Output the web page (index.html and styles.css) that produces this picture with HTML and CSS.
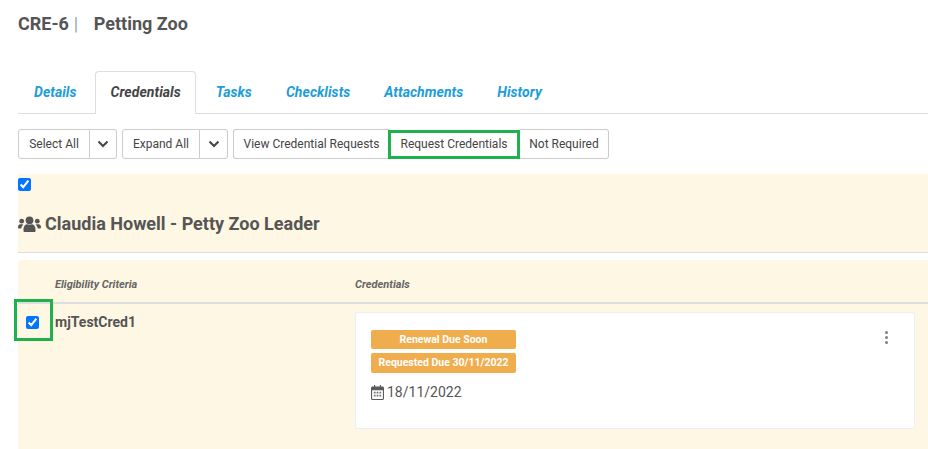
FILE: index.html
```html
<!DOCTYPE html>
<html lang="en">
<head>
<meta charset="utf-8">
<title>Petting Zoo</title>
<link rel="stylesheet" href="styles.css">
</head>
<body>
<main class="page">
  <h1 class="title"><span>CRE-6</span><span class="sep">|</span><span class="name">Petting Zoo</span></h1>
  <nav class="tabs">
    <a class="tab">Details</a>
    <a class="tab active">Credentials</a>
    <a class="tab">Tasks</a>
    <a class="tab">Checklists</a>
    <a class="tab">Attachments</a>
    <a class="tab">History</a>
  </nav>
  <div class="toolbar">
    <div class="split">
      <button class="btn">Select All</button>
      <button class="btn caret"><svg width="12" height="8" viewBox="0 0 12 8"><path d="M1.5 1.5 6 6l4.5-4.5" fill="none" stroke="#444" stroke-width="2"/></svg></button>
    </div>
    <div class="split">
      <button class="btn expand">Expand All</button>
      <button class="btn caret wide"><svg width="12" height="8" viewBox="0 0 12 8"><path d="M1.5 1.5 6 6l4.5-4.5" fill="none" stroke="#444" stroke-width="2"/></svg></button>
    </div>
    <div class="group">
      <button class="btn view">View Credential Requests</button>
      <button class="btn request">Request Credentials</button>
      <button class="btn notreq">Not Required</button>
    </div>
  </div>
  <section class="person">
    <label class="check top"><input type="checkbox" checked></label>
    <h2 class="person-name">
      <svg class="users" width="23" height="16" viewBox="0 0 23 16"><g fill="#555"><circle cx="11.5" cy="4.3" r="3.9"/><path d="M5.5 15.2v-2.4c0-2.8 2-4.6 3.7-4.6 1.4.6 3.2.6 4.6 0 1.7 0 3.7 1.8 3.7 4.6v2.4c0 .5-.4.8-.8.8H6.3c-.4 0-.8-.3-.8-.8z"/><circle cx="3.7" cy="5.2" r="2.4"/><circle cx="19.3" cy="5.2" r="2.4"/><path d="M0 11.2c0-1.7 1-3 2.3-3h1.8c.5 0 1 .2 1.3.5-1.2.9-2 2.4-2.2 3.9H1.1c-.6 0-1.1-.5-1.1-1.4z"/><path d="M23 11.2c0-1.7-1-3-2.3-3h-1.800c-.5 0-1 .2-1.300.5 1.200.9 2 2.400 2.200 3.900h2.100c.6 0 1.100-.5 1.100-1.400z"/></g></svg>
      Claudia Howell - Petty Zoo Leader
    </h2>
  </section>
  <section class="table">
    <div class="thead">
      <div class="col-a">Eligibility Criteria</div>
      <div class="col-b">Credentials</div>
    </div>
    <div class="row">
      <div class="cell-check">
        <label class="check"><input type="checkbox" checked></label>
        <span class="highlight"></span>
      </div>
      <div class="col-a cred-name">mjTestCred1</div>
      <div class="col-b">
        <article class="card">
          <div class="card-main">
            <span class="badge">Renewal Due Soon</span>
            <span class="badge">Requested Due 30/11/2022</span>
            <div class="date">
              <svg width="13" height="15" viewBox="0 0 13 15"><path fill="#5a5a5a" fill-rule="evenodd" d="M3 0h1.200v1.500h4.600V0H10v1.500h1.500c.8 0 1.500.7 1.500 1.500v10.500c0 .8-.7 1.500-1.500 1.500h-10C.7 15 0 14.300 0 13.500V3c0-.8.7-1.500 1.500-1.500H3zM1.100 5.200v8.300c0 .2.200.4.400.4h10c.2 0 .4-.2.400-.4V5.200z"/><path fill="#777" d="M2.800 6.800h1.800v1.600H2.800zM5.600 6.800h1.800v1.600H5.600zM8.400 6.800h1.800v1.600H8.400zM2.800 9.800h1.800v1.600H2.800zM5.600 9.800h1.800v1.600H5.600zM8.400 9.800h1.800v1.600H8.400z"/></svg>
              <span>18/11/2022</span>
            </div>
          </div>
          <div class="dots"><i></i><i></i><i></i></div>
        </article>
      </div>
    </div>
  </section>
</main>
</body>
</html>
```
FILE: styles.css
```css
* { box-sizing: border-box; }
html, body { margin: 0; padding: 0; height: 449px; overflow: hidden; background: #fff; }
body { font-family: Roboto, "Liberation Sans", sans-serif; color: #555; }
.page { padding: 13px 0 0 18px; }

.title { margin: 0; font-size: 18px; line-height: 21px; font-weight: 700; color: #555; display: flex; }
.title .sep { font-weight: 400; color: #9aa5ad; margin-left: 5px; }
.title .name { margin-left: 15.5px; }

.tabs { margin-top: 37px; height: 43px; display: flex; border-bottom: 1px solid #dedede; }
.tab { padding: 13px 16px 0; font-size: 14px; line-height: 16px; font-weight: 700; font-style: italic; letter-spacing: 0.05px; color: #1b9dd9; height: 42px; margin-right: 2px; }
.tab.active { color: #444; background: #fff; border: 1px solid #dedede; border-bottom: 0; border-radius: 4px 4px 0 0; height: 43px; padding: 12px 14px 0 15px; margin-left: 0; margin-right: 4px; }

.toolbar { margin-top: 15px; display: flex; gap: 5px; height: 30px; }
.split, .group { display: flex; height: 30px; }
.btn { font: 400 12px/16px Roboto, "Liberation Sans", sans-serif; color: #444; background: #fff; border: 1px solid #ccc; padding: 0; height: 30px; }
.split .btn:first-child { width: 72px; border-radius: 3px 0 0 3px; }
.split .btn.expand { width: 78px; }
.split .caret { width: 27px; border-left: 0; border-radius: 0 3px 3px 0; display: flex; align-items: center; justify-content: center; }
.split .caret.wide { width: 28px; }
.group .view { width: 156px; border-radius: 3px 0 0 3px; border-right: 0; }
.group .request { width: 132px; margin-left: -1px; border: 3px solid #1fb14e; height: 29px; margin-top: 1px; padding-bottom: 2px; }
.group .notreq { width: 89px; border-left: 0; border-radius: 0 3px 3px 0; }

.person { margin-top: 15px; height: 79px; background: #fef7e3; border-bottom: 1px solid #dcdcdc; padding-top: 4px; }
.check { display: block; width: 13px; height: 13px; }
.check input { display: block; margin: 0; width: 13px; height: 13px; accent-color: #0075ff; }
.person-name { margin: 22px 0 0; font-size: 18px; line-height: 21px; font-weight: 700; color: #555; display: flex; align-items: center; gap: 4px; }

.table { margin-top: 7px; background: #fef7e3; height: 189px; border-radius: 4px 0 0 0; }
.thead { display: flex; height: 44px; border-bottom: 2px solid #dedede; font-size: 11px; line-height: 13px; font-weight: 700; font-style: italic; color: #666; padding-top: 18px; }
.thead .col-a { margin-left: 37px; width: 300px; }
.row { display: flex; padding-top: 8px; }
.cell-check { width: 37px; flex: none; padding: 4px 0 0 8px; position: relative; }
.highlight { position: absolute; left: -4px; top: -13px; width: 39px; height: 42px; border: 3px solid #1fb14e; }
.cred-name { width: 300px; flex: none; font-size: 14px; line-height: 16px; font-weight: 700; color: #555; padding-top: 2px; }
.row .col-b { flex: 1; padding-right: 13px; }

.card { background: #fff; height: 117px; border-radius: 3px; border: 1px solid #e6f0f5; padding: 17px 26px 0 15px; display: flex; justify-content: space-between; }
.card-main { width: 145px; display: flex; flex-direction: column; }
.badge { display: block; background: #f0ad4e; color: #fff; font-size: 10.5px; line-height: 19px; height: 19px; font-weight: 700; text-align: center; border-radius: 2px; margin-bottom: 4px; white-space: nowrap; }
.badge + .badge { height: 20px; line-height: 20px; margin-bottom: 0; }
.date { margin-top: 9px; display: flex; align-items: center; gap: 3px; font-size: 14px; line-height: 20px; color: #555; }
.dots { display: flex; flex-direction: column; gap: 2px; padding-top: 1px; }
.dots i { display: block; width: 3px; height: 3px; border-radius: 50%; background: #807f7c; }
```
